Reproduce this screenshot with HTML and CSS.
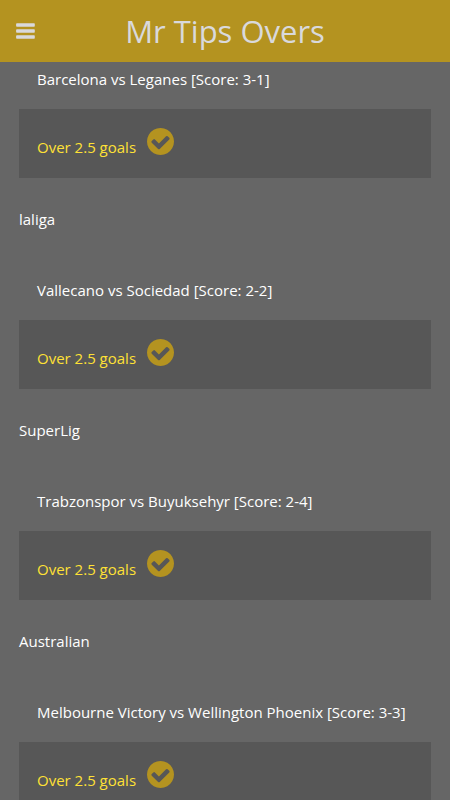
FILE: index.html
```html
<!DOCTYPE html>
<html lang="en">
<head>
<meta charset="utf-8">
<meta name="viewport" content="width=device-width, initial-scale=1">
<title>Mr Tips Overs</title>
<link rel="stylesheet" href="styles.css">
</head>
<body>
<svg class="symbols" aria-hidden="true">
  <symbol id="check" viewBox="0 0 1536 1536">
    <path d="M1284 606q0-28-18-46l-91-90q-19-19-45-19t-45 19L677 877 451 651q-19-19-45-19t-45 19l-91 90q-18 18-18 46 0 27 18 45l362 362q19 19 45 19 27 0 46-19l543-543q18-18 18-45zM1536 768q0 209-103 385.500T1153.500 1433 768 1536t-385.500-103T103 1153.500 0 768t103-385.500T382.500 103 768 0t385.500 103T1433 382.500 1536 768z"/>
  </symbol>
</svg>
<header class="bar">
  <button class="menu" type="button" aria-label="Menu">
    <svg viewBox="0 0 19 16" aria-hidden="true"><rect x=".1" y=".3" width="18.700" height="3.400" rx=".8"/><rect x=".1" y="6.300" width="18.700" height="3.400" rx=".8"/><rect x=".1" y="12.300" width="18.700" height="3.400" rx=".8"/></svg>
  </button>
  <h1 class="title">Mr Tips Overs</h1>
</header>
<main class="tips">
  <section class="tip">
    <p class="match">Barcelona vs Leganes [Score: 3-1]</p>
    <div class="pick"><span>Over 2.5 goals</span><svg class="check" aria-hidden="true"><use href="#check"/></svg></div>
  </section>
  <section class="tip">
    <h2 class="league">laliga</h2>
    <p class="match">Vallecano vs Sociedad [Score: 2-2]</p>
    <div class="pick"><span>Over 2.5 goals</span><svg class="check" aria-hidden="true"><use href="#check"/></svg></div>
  </section>
  <section class="tip">
    <h2 class="league">SuperLig</h2>
    <p class="match">Trabzonspor vs Buyuksehyr [Score: 2-4]</p>
    <div class="pick"><span>Over 2.5 goals</span><svg class="check" aria-hidden="true"><use href="#check"/></svg></div>
  </section>
  <section class="tip">
    <h2 class="league">Australian</h2>
    <p class="match">Melbourne Victory vs Wellington Phoenix [Score: 3-3]</p>
    <div class="pick"><span>Over 2.5 goals</span><svg class="check" aria-hidden="true"><use href="#check"/></svg></div>
  </section>
</main>
</body>
</html>
```

FILE: styles.css
```css
* {
  box-sizing: border-box;
}

html {
  height: 100%;
  overflow: hidden;
}

body {
  display: flex;
  flex-direction: column;
  height: 100%;
  margin: 0;
  background: #666;
  color: #fff;
  font: 15px/22px "Open Sans", sans-serif;
}

.symbols {
  position: absolute;
  width: 0;
  height: 0;
}

.bar {
  display: grid;
  grid-template-columns: 50px 1fr 50px;
  align-items: center;
  flex: none;
  background: #b49320;
  color: #d9d9dc;
}

.menu {
  display: flex;
  justify-content: center;
  padding: 16px 0;
  border: 0;
  background: none;
  color: inherit;
}

.menu svg {
  width: 19px;
  height: 16px;
  fill: currentColor;
}

.title {
  margin: 0;
  font-size: 31px;
  font-weight: 400;
  line-height: 62px;
  text-align: center;
}

.tips {
  flex: 1;
  min-height: 0;
  overflow: hidden;
  padding: 6px 19px 0;
}

.tip {
  margin-bottom: 30px;
}

.league {
  margin: 0 0 49px;
  font-size: 15px;
  font-weight: 400;
}

.match {
  margin: 0 0 19px;
  padding-left: 18px;
}

.pick {
  display: flex;
  align-items: center;
  gap: 11px;
  height: 69px;
  padding: 0 18px;
  background: #575757;
  color: #ffe135;
}

.pick span {
  padding-top: 6px;
}

.check {
  width: 27px;
  height: 27px;
  margin-bottom: 4px;
  fill: #b49320;
}
```
